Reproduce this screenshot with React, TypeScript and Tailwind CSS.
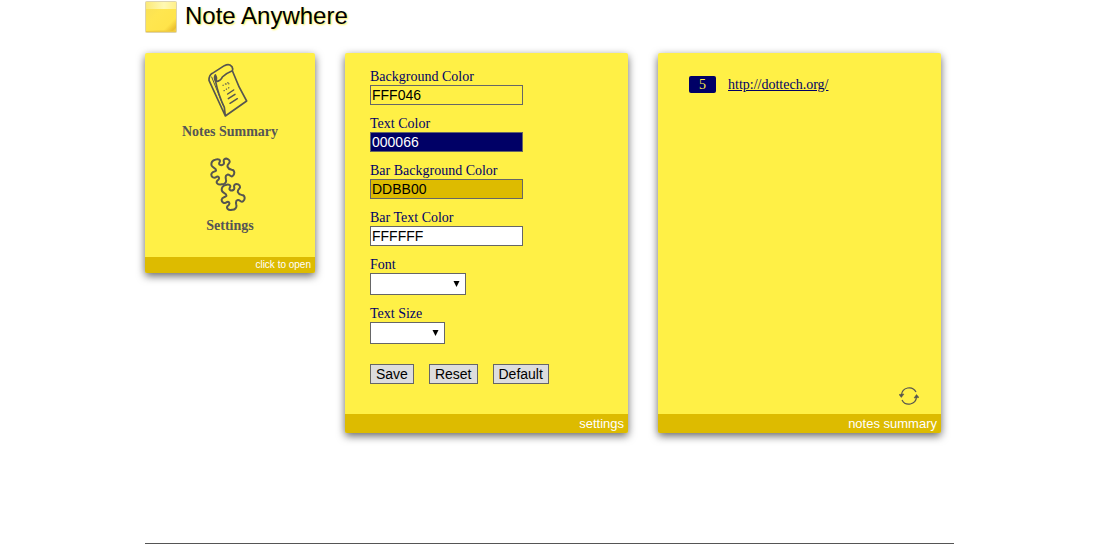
import { useState } from "react";
import type { ReactNode } from "react";

type CardProps = {
  title: string;
  small?: boolean;
  children: ReactNode;
};

const colorFields = [
  { id: "bg", label: "Background Color", value: "FFF046", look: "bg-[#fff046] text-black" },
  { id: "text", label: "Text Color", value: "000066", look: "bg-[#000066] text-white" },
  { id: "bar-bg", label: "Bar Background Color", value: "DDBB00", look: "bg-[#ddbb00] text-black" },
  { id: "bar-text", label: "Bar Text Color", value: "FFFFFF", look: "bg-white text-black" },
];

const selects = [
  { id: "font", label: "Font", width: "w-24", options: ["", "Arial", "Times"] },
  { id: "size", label: "Text Size", width: "w-[75px]", options: ["", "12", "14"] },
];

const sites = [{ url: "http://dottech.org/", count: 5 }];

function Logo() {
  return (
    <svg width="32" height="32" viewBox="0 0 32 32" aria-hidden="true">
      <defs>
        <linearGradient id="note" x1="0" y1="0" x2="1" y2="1">
          <stop offset="0" stopColor="#f7df58" />
          <stop offset="0.4" stopColor="#ffe650" />
          <stop offset="0.75" stopColor="#ffe44a" />
          <stop offset="0.9" stopColor="#ebc02e" />
          <stop offset="1" stopColor="#f8e070" />
        </linearGradient>
        <linearGradient id="strip" x1="0" y1="0" x2="1" y2="0">
          <stop offset="0" stopColor="#fbe978" />
          <stop offset="0.6" stopColor="#fff9b4" />
          <stop offset="1" stopColor="#fff08a" />
        </linearGradient>
      </defs>
      <rect x="0.5" y="0.5" width="31" height="31" rx="1" fill="url(#note)" stroke="#dcd3b0" />
      <path d="M1 1h30v7H1z" fill="url(#strip)" />
      <path d="M1 30Q16 29 31 30V31H1z" fill="#efcb45" />
    </svg>
  );
}

function ScrollIcon() {
  return (
    <svg width="44" height="54" viewBox="39 24 132 162" fill="none" stroke="#56554f" strokeLinecap="round" strokeLinejoin="round" aria-hidden="true">
      <path strokeWidth="5" d="M62 80Q56 68 61 60Q67 70 62 80Q78 78 82 66Q94 54 112 47Q116 36 105 30Q98 27 88 32L52 55Q42 60 42 76L91 183L155 138Q130 96 112 47M62 80Q70 120 88 157L91 183" />
      <path strokeWidth="3" d="M50 66L84 150" />
      <path strokeWidth="3.5" strokeDasharray="1 7" d="M84 91L99 83M87 107L105 96M93 87L106 86" />
      <path strokeWidth="4.5" d="M98 117L116 105M100 131L120 118M105 145L127 131" />
    </svg>
  );
}

function PuzzleIcon() {
  const piece =
    "M50 47C47 38 53 30 61 29C70 26 79 29 73 38C70 45 78 47 84 44C92 40 82 33 88 28C94 23 105 28 104 36C102 42 95 44 98 51C101 58 106 58 110 59C120 60 120 73 113 78C107 83 104 72 97 74C89 76 92 83 93 89C95 97 88 104 80 103C68 106 62 98 67 92C76 86 72 78 65 80C58 86 48 82 49 73C50 64 60 66 63 62C65 54 53 54 50 47Z";

  return (
    <svg width="40" height="55" viewBox="45 18 120 165" fill="none" stroke="#56554f" strokeWidth="6" strokeLinejoin="round" aria-hidden="true">
      <path d={piece} />
      <path d={piece} transform="translate(31 76)" />
    </svg>
  );
}

function RefreshIcon() {
  return (
    <svg width="20" height="20" viewBox="0 0 20 20" fill="none" stroke="#56554f" strokeWidth="1.2" aria-hidden="true">
      <path d="M2.5 9A7.7 7.7 0 0 1 17 6M17.5 11A7.7 7.7 0 0 1 3 14" />
      <path d="M0 8.5L5 8L2.3 11.5ZM15 12L17.5 8.5L20 11.5Z" fill="#56554f" strokeWidth="0.5" />
    </svg>
  );
}

function Card({ title, small, children }: CardProps) {
  return (
    <section
      className={
        small
          ? "flex min-h-[220px] w-[170px] flex-col rounded-xs bg-[#fff046] shadow-[0_3px_8px_rgba(0,0,0,0.6)]"
          : "flex min-h-[380px] w-[283px] flex-col rounded-xs bg-[#fff046] shadow-[0_3px_8px_rgba(0,0,0,0.6)]"
      }
    >
      <div className="flex grow flex-col">{children}</div>
      <h2
        className={
          small
            ? "rounded-b-xs bg-[#ddbb00] px-1 text-right font-['Liberation_Sans',sans-serif] text-[10px] leading-4 text-white"
            : "rounded-b-xs bg-[#ddbb00] px-1 text-right font-['Liberation_Sans',sans-serif] text-[13px] leading-[19px] text-white"
        }
      >
        {title}
      </h2>
    </section>
  );
}

export default function App() {
  const [colors, setColors] = useState(colorFields.map((f) => f.value));

  const reset = () => setColors(colorFields.map((f) => f.value));

  const setColor = (index: number, value: string) => {
    setColors((prev) => prev.map((c, i) => (i === index ? value : c)));
  };

  const buttons = [
    { name: "Save", onClick: undefined },
    { name: "Reset", onClick: reset },
    { name: "Default", onClick: reset },
  ];

  return (
    <div className="mx-auto max-w-[809px] bg-white font-['Liberation_Serif',serif] text-[14px] leading-4 text-[#000066]">
      <header className="flex gap-2 pt-px">
        <Logo />
        <h1 className="font-['Liberation_Sans',sans-serif] text-[24px] leading-[30px] text-black [text-shadow:1px_1px_2px_#fff046]">
          Note Anywhere
        </h1>
      </header>

      <main className="mt-5 flex min-h-[490px] items-start gap-[30px]">
        <Card title="click to open" small>
          <nav className="flex flex-col items-center gap-4 pt-2.5 font-bold text-[#555]">
            <button className="flex flex-col items-center gap-[7px]">
              <ScrollIcon />
              Notes Summary
            </button>
            <button className="flex flex-col items-center gap-[7px]">
              <PuzzleIcon />
              Settings
            </button>
          </nav>
        </Card>

        <Card title="settings">
          <form className="flex flex-col gap-[11px] px-[25px] pt-4" onSubmit={(e) => e.preventDefault()}>
            {colorFields.map((field, i) => (
              <div key={field.id} className="flex flex-col items-start">
                <label htmlFor={field.id}>{field.label}</label>
                <input
                  id={field.id}
                  type="text"
                  value={colors[i]}
                  onChange={(e) => setColor(i, e.target.value)}
                  className={`h-5 w-[153px] border border-[#666] px-px font-['Liberation_Sans',sans-serif] ${field.look}`}
                />
              </div>
            ))}
            {selects.map((field) => (
              <div key={field.id} className="flex flex-col items-start">
                <label htmlFor={field.id}>{field.label}</label>
                <div className="relative">
                  <select id={field.id} className={`block h-[22px] appearance-none border border-[#666] bg-white px-1 text-black ${field.width}`}>
                    {field.options.map((o) => (
                      <option key={o}>{o}</option>
                    ))}
                  </select>
                  <svg className="pointer-events-none absolute top-2 right-1.5" width="7" height="6" viewBox="0 0 7 6" aria-hidden="true">
                    <path d="M0.5 0h6L3.5 6z" fill="#000" />
                  </svg>
                </div>
              </div>
            ))}
            <div className="flex gap-[15px] pt-[9px]">
              {buttons.map((b) => (
                <button
                  key={b.name}
                  type="button"
                  onClick={b.onClick}
                  className="h-5 border border-[#666] bg-[#ddd] px-[5px] font-['Liberation_Sans',sans-serif] text-black"
                >
                  {b.name}
                </button>
              ))}
            </div>
          </form>
        </Card>

        <Card title="notes summary">
          <ul className="grow px-[31px] pt-[23px]">
            {sites.map((site) => (
              <li key={site.url} className="flex items-center gap-3">
                <span className="h-[17px] w-[27px] rounded-xs bg-[#000066] text-center leading-[17px] text-[#fff046]">{site.count}</span>
                <a href={site.url} className="underline">
                  {site.url}
                </a>
              </li>
            ))}
          </ul>
          <button className="mr-[22px] mb-2 self-end" aria-label="Refresh">
            <RefreshIcon />
          </button>
        </Card>
      </main>

      <hr className="border-t border-[#555]" />
    </div>
  );
}
